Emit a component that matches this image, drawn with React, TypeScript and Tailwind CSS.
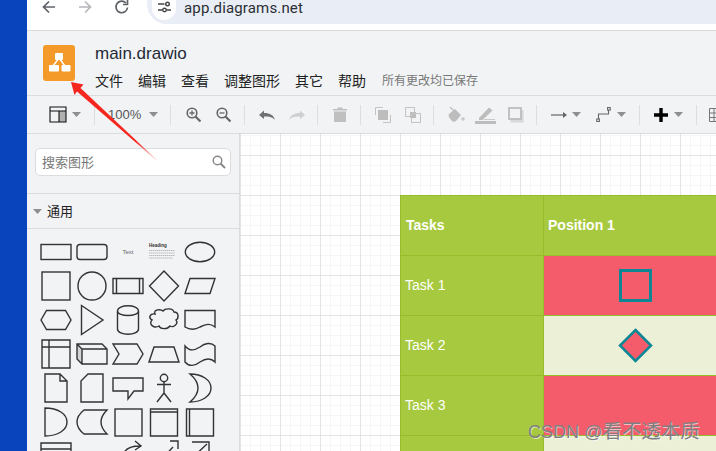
const BORDER = "border-[#dadce0]";

function Caret({ className = "" }: { className?: string }) {
  return (
    <svg width="9" height="5" viewBox="0 0 9 5" className={`shrink-0 ${className}`}>
      <path d="M0 0H9L4.5 5Z" fill="#8f8f8f" />
    </svg>
  );
}

function Sep({ className = "" }: { className?: string }) {
  return <div className={`w-px h-[20px] shrink-0 bg-[#dcdee1] ${className}`} />;
}

function BrowserBar() {
  return (
    <div className={`h-[31px] shrink-0 flex bg-white border-b ${BORDER}`}>
      <svg width="120" height="30" viewBox="0 0 120 30" className="shrink-0" fill="none" strokeWidth="1.7">
        <path d="M28 7H17M22 1.5L16.5 7L22 12.5" stroke="#5f6368" />
        <path d="M52 7H63M58 1.5L63.5 7L58 12.5" stroke="#b4b7bb" />
        <path d="M100.5 7.5A5.8 5.8 0 1 1 99 3" stroke="#5f6368" />
        <path d="M100.5 0V4.5H96" stroke="#5f6368" />
      </svg>
      <div className="h-[24px] flex-1 bg-[#e9edf6] rounded-bl-[20px] flex items-start pl-[5px]">
        <div className="w-[24px] h-[20px] bg-white rounded-b-full flex justify-center pt-[1px]">
          <svg width="13" height="12" viewBox="0 0 13 12" fill="none" stroke="#444746" strokeWidth="1.4">
            <path d="M0 3H6.5M0 9H4M9 9H13" />
            <circle cx="9.5" cy="3" r="1.8" />
            <circle cx="6.5" cy="9" r="1.8" />
          </svg>
        </div>
        <span className="ml-[8px] text-[15px] leading-[16px] tracking-[0.15px] text-[#2b2f33] font-['Roboto',sans-serif]">
          app.diagrams.net
        </span>
      </div>
    </div>
  );
}

function Logo() {
  return (
    <div className="w-[32px] h-[36px] rounded-[3px] bg-[#f39a2b] flex items-center justify-center shrink-0">
      <svg width="24" height="22" viewBox="0 0 24 22">
        <path d="M12 6L6 14M12 6L18 14" stroke="#fff" strokeWidth="1.4" />
        <rect x="8" y="1" width="8" height="7" rx="1" fill="#fff" />
        <rect x="2" y="13" width="10" height="6.5" rx="1" fill="#fff" />
        <rect x="14.5" y="13" width="9" height="6.5" rx="1" fill="#fff" />
      </svg>
    </div>
  );
}

function AppHeader() {
  const menus = ["文件", "编辑", "查看", "调整图形", "其它", "帮助"];
  return (
    <div className={`h-[65px] shrink-0 bg-[#f1f3f5] border-b ${BORDER} flex pl-[16px] pt-[14px]`}>
      <Logo />
      <div className="ml-[20px] -mt-[1px]">
        <div className="text-[17px] leading-[20px] text-[#1f2a36] font-['Liberation_Sans',sans-serif]">main.drawio</div>
        <div className="mt-[6px] flex items-center gap-[15px] text-[14px] leading-[20px] text-[#222] font-['Noto_Sans_CJK_SC',sans-serif]">
          {menus.map((m) => (
            <span key={m}>{m}</span>
          ))}
          <span className="ml-[1px] text-[12px] text-[#777]">所有更改均已保存</span>
        </div>
      </div>
    </div>
  );
}

function Toolbar() {
  return (
    <div className={`h-[38px] shrink-0 bg-[#f1f3f5] border-b ${BORDER} flex items-center overflow-hidden`}>
      <svg width="18" height="17" viewBox="0 0 18 17" className="ml-[22px] shrink-0">
        <path d="M10 5H17V16H10Z" fill="#b0b0b0" />
        <path d="M1 1H17V16H1ZM1 5H17M10 5V16" fill="none" stroke="#111" strokeWidth="1.1" />
      </svg>
      <Caret className="ml-[5px]" />
      <Sep className="ml-[13px]" />
      <span className="ml-[13px] w-[35px] text-[13px] leading-none text-[#555] font-['Liberation_Sans',sans-serif]">100%</span>
      <Caret className="ml-[8px]" />
      <Sep className="ml-[12px]" />
      <svg width="15" height="15" viewBox="0 0 15 15" className="ml-[15px] shrink-0" fill="none" stroke="#666" strokeWidth="1.6">
        <circle cx="6" cy="6" r="4.8" />
        <path d="M9.5 9.5L14.5 14.5" strokeWidth="2.2" />
        <path d="M3.5 6H8.5M6 3.5V8.5" strokeWidth="1.3" />
      </svg>
      <svg width="15" height="15" viewBox="0 0 15 15" className="ml-[15px] shrink-0" fill="none" stroke="#666" strokeWidth="1.6">
        <circle cx="6" cy="6" r="4.8" />
        <path d="M9.5 9.5L14.5 14.5" strokeWidth="2.2" />
        <path d="M3.5 6H8.5" strokeWidth="1.3" />
      </svg>
      <Sep className="ml-[13px]" />
      <svg width="16" height="10" viewBox="0 0 16 10" className="ml-[14px] shrink-0">
        <path d="M0 5L5 0.5V3C11 3 14.5 5 16 10C13.5 7 10.5 6.5 5 6.5V9Z" fill="#707070" />
      </svg>
      <svg width="16" height="10" viewBox="0 0 16 10" className="ml-[14px] shrink-0">
        <path d="M16 5L11 0.5V3C5 3 1.5 5 0 10C2.5 7 5.5 6.5 11 6.5V9Z" fill="#cfcfcf" />
      </svg>
      <Sep className="ml-[12px]" />
      <svg width="14" height="15" viewBox="0 0 14 15" className="ml-[15px] shrink-0">
        <path d="M0 2H4.5V0.5H9.5V2H14V3.5H0ZM1 4.5H13V15H1Z" fill="#c0c0c0" />
      </svg>
      <Sep className="ml-[13px]" />
      <svg width="16" height="16" viewBox="0 0 16 16" className="ml-[14px] shrink-0">
        <path d="M0.5 8V0.5H8M8 15.5H15.5V8" fill="none" stroke="#c4c4c4" />
        <rect x="3" y="3" width="10" height="10" fill="#bdbdbd" />
      </svg>
      <svg width="16" height="16" viewBox="0 0 16 16" className="ml-[14px] shrink-0">
        <rect x="0.5" y="0.5" width="9" height="9" fill="#f1f3f5" stroke="#c4c4c4" />
        <rect x="5" y="5" width="6" height="6" fill="#bdbdbd" />
        <rect x="6.5" y="6.5" width="9" height="9" fill="none" stroke="#c4c4c4" />
      </svg>
      <Sep className="ml-[12px]" />
      <svg width="17" height="16" viewBox="0 0 17 16" className="ml-[14px] shrink-0">
        <path d="M1 7L7 2L13 8L8 14C6.5 15 5 15 4 14L1.5 11C0.5 10 0.5 8 1 7Z" fill="#bdbdbd" />
        <path d="M2 0L7 5" stroke="#bdbdbd" strokeWidth="1.2" />
        <circle cx="15" cy="12" r="1.8" fill="#c8c8c8" />
      </svg>
      <svg width="21" height="18" viewBox="0 0 21 18" className="ml-[10px] shrink-0">
        <path d="M4 12L14 1.5L17.5 4.5L7.5 14H4Z" fill="#bdbdbd" />
        <rect x="0" y="15" width="21" height="3" fill="#bdbdbd" />
        <path d="M9 13.5H20" stroke="#c8c8c8" />
      </svg>
      <svg width="16" height="16" viewBox="0 0 16 16" className="ml-[12px] shrink-0">
        <rect x="2.5" y="3" width="13" height="12.5" fill="#d8d8d8" />
        <rect x="1" y="1" width="12" height="11" fill="#f1f3f5" stroke="#bdbdbd" strokeWidth="1.8" />
      </svg>
      <Sep className="ml-[12px]" />
      <svg width="16" height="8" viewBox="0 0 16 8" className="ml-[14px] shrink-0">
        <path d="M0 4H13" stroke="#666" strokeWidth="1.2" />
        <path d="M12 1L16 4L12 7Z" fill="#666" />
      </svg>
      <Caret className="ml-[5px]" />
      <svg width="15" height="15" viewBox="0 0 15 15" className="ml-[15px] shrink-0" fill="none" stroke="#666" strokeWidth="1.1">
        <path d="M2.5 12.5V7H12.5V2.5" />
        <rect x="0.8" y="12" width="2.6" height="2.6" fill="#f1f3f5" />
        <rect x="11.6" y="0.5" width="2.6" height="2.6" fill="#f1f3f5" />
      </svg>
      <Caret className="ml-[6px]" />
      <Sep className="ml-[13px]" />
      <svg width="14" height="14" viewBox="0 0 14 14" className="ml-[14px] shrink-0">
        <path d="M5.3 0H8.7V5.3H14V8.7H8.7V14H5.3V8.7H0V5.3H5.3Z" fill="#000" />
      </svg>
      <Caret className="ml-[6px]" />
      <Sep className="ml-[13px]" />
      <svg width="14" height="14" viewBox="0 0 14 14" className="ml-[12px] shrink-0" fill="none" stroke="#777">
        <path d="M0.5 0.5H14V13.5H0.5ZM0.5 5H14M0.5 9.5H14M5 0.5V13.5M10 0.5V13.5" />
      </svg>
    </div>
  );
}

const S = { fill: "none", stroke: "#333", strokeWidth: 1.4 };

const SHAPES: React.ReactNode[] = [
  <rect x="3" y="9.5" width="30" height="15" {...S} />,
  <rect x="3" y="9.5" width="30" height="15" rx="3" {...S} />,
  <text x="18" y="19" textAnchor="middle" fontSize="6" fill="#666" fontFamily="Liberation Sans, sans-serif">Text</text>,
  <g>
    <text x="3" y="12" fontSize="4.5" fontWeight="700" fill="#333" fontFamily="Liberation Sans, sans-serif">Heading</text>
    <path d="M3 15.5H29M3 18H29M3 20.5H29M3 23H27" stroke="#aaa" strokeWidth="0.8" strokeDasharray="1.5 0.5" />
  </g>,
  <ellipse cx="18" cy="17" rx="14.7" ry="9.7" {...S} />,
  <rect x="4" y="3" width="28" height="28" {...S} />,
  <circle cx="18" cy="17" r="14" {...S} />,
  <path d="M3 9.5H33V24.5H3ZM6.5 9.5V24.5M29.5 9.5V24.5" {...S} />,
  <path d="M18 2L32.5 17L18 32L3.5 17Z" {...S} />,
  <path d="M3 24.5L8 9.5H33L28 24.5Z" {...S} />,
  <path d="M3 17L8.5 7.5H27.5L33 17L27.5 26.5H8.5Z" {...S} />,
  <path d="M7.5 2.5L29 17L7.5 31.5Z" {...S} />,
  <path d="M7.5 8V26C7.5 33 28.5 33 28.5 26V8C28.5 1 7.5 1 7.5 8C7.5 14 28.5 14 28.5 8" {...S} />,
  <path d="M9 11C7 6 15 6 17 8C19 5 27 5 28 9C33 9 33 15 30 17C33 21 27 25 24 23C21 27 14 26 13 23C8 26 2 21 6 17C2 15 4 10 9 11Z" {...S} />,
  <path d="M3 7.5H33V24C28 20 24 21 18 24C13 27 8 27 3 24Z" {...S} />,
  <path d="M4 3H32V31H4ZM4 10H32M11 3V31" {...S} />,
  <g>
    <path d="M3 7L8 12V27L3 22Z" fill="#d4d4d4" />
    <path d="M3 7H28L33 12V27H8L3 22ZM3 7L8 12H33M8 12V27" {...S} />
  </g>,
  <path d="M3 7H27L33 17L27 27H3L9 17Z" {...S} />,
  <path d="M3 25L8 10H28L33 25Z" {...S} />,
  <path d="M3 9C8 15 13 13 18 10C23 6 29 5 33 9V25C29 21 24 21 18 25C13 29 7 30 3 25Z" {...S} />,
  <path d="M7 3H22L29 10V31H7ZM22 3V10H29" {...S} />,
  <path d="M14 3H29V31H7V10Z" {...S} />,
  <path d="M3 7H33V20H24L18 28V20H3Z" {...S} />,
  <g {...S}>
    <circle cx="18" cy="7" r="3.7" />
    <path d="M18 10.7V22M11 13.5H25M18 22L11 31M18 22L25 31" />
  </g>,
  <path d="M8 3C20 3 29 9 29 17C29 25 20 31 8 31C14 26 16 21 16 17C16 13 14 8 8 3Z" {...S} />,
  <path d="M7 3C20 3 29 9 29 17C29 25 20 31 7 31Z" {...S} />,
  <path d="M10 5H33C28 10 27 13 27 17C27 21 28 24 33 29H10C5 25 3 21 3 17C3 13 5 9 10 5Z" {...S} />,
  <rect x="5" y="4" width="27" height="27" {...S} />,
  <path d="M4.5 4H31.5V31H4.5ZM4.5 7H31.5" {...S} />,
  <path d="M4.5 4H31.5V31H4.5ZM7.5 4V31" {...S} />,
  <path d="M3 4H33V20H3ZM3 10H33" {...S} />,
  <span />,
  <path d="M13 32C13 24 18 20 30 20M25 15L31 20L25 24" {...S} transform="translate(0 -13)" />,
  <path d="M12 30L27 14M24 8H32V16" {...S} transform="translate(0 -6)" />,
  <path d="M10 8H27V17M10 24L25 10" {...S} transform="translate(0 -5)" />,
];

function Sidebar() {
  return (
    <aside className={`w-[213px] shrink-0 bg-[#f1f3f5] border-r ${BORDER} overflow-hidden`}>
      <div className={`h-[60px] border-b ${BORDER} px-[8px] pt-[14px]`}>
        <div className={`h-[28px] bg-white border ${BORDER} rounded-[5px] flex items-center justify-between pl-[6px] pr-[4px]`}>
          <span className="-mt-[1px] text-[13px] text-[#777] font-['Noto_Sans_CJK_SC',sans-serif]">搜索图形</span>
          <svg width="14" height="14" viewBox="0 0 14 14" fill="none" stroke="#888" strokeWidth="1.4">
            <circle cx="5.5" cy="5.5" r="4.3" />
            <path d="M8.5 8.5L13 13" strokeWidth="2" />
          </svg>
        </div>
      </div>
      <div className={`h-[35px] border-b ${BORDER} flex items-center pl-[6px]`}>
        <Caret />
        <span className="-mt-[1px] ml-[5px] text-[13px] text-[#222] font-['Noto_Sans_CJK_SC',sans-serif]">通用</span>
      </div>
      <div className="grid grid-cols-[repeat(5,36px)] auto-rows-[34px] pl-[10.5px] pt-[6px]">
        {SHAPES.map((shape, i) => (
          <svg key={i} width="36" height="34" viewBox="0 0 36 34" className="overflow-visible">
            {shape}
          </svg>
        ))}
      </div>
    </aside>
  );
}

const ROWS = [
  { label: "Task 1", bg: "bg-[#f55c6b]", mark: "square" },
  { label: "Task 2", bg: "bg-[#ebf0d6]", mark: "diamond" },
  { label: "Task 3", bg: "bg-[#f55c6b]", mark: "" },
  { label: "", bg: "bg-[#ebf0d6]", mark: "" },
];

function TaskTable() {
  return (
    <div className="ml-[160px] w-[400px] border-t border-l border-[#98bb2a] text-white text-[14px] font-['Liberation_Sans',sans-serif]">
      <div className="h-[60px] flex border-b border-[#98bb2a] bg-[#a7c93f] font-bold">
        <div className="w-[143px] border-r border-[#98bb2a] pl-[5px] flex items-center">Tasks</div>
        <div className="flex-1 pl-[4px] flex items-center">Position 1</div>
      </div>
      {ROWS.map((row, i) => (
        <div key={i} className="h-[60px] flex border-b border-[#98bb2a]">
          <div className="w-[143px] border-r border-[#98bb2a] bg-[#a7c93f] pl-[4px] flex items-center">{row.label}</div>
          <div className={`flex-1 ${row.bg}`}>
            <div className="w-[183px] h-full flex items-center justify-center">
              {row.mark === "square" && <div className="w-[33px] h-[33px] border-[3px] border-[#0d8796]" />}
              {row.mark === "diamond" && (
                <svg width="35" height="35" viewBox="0 0 35 35">
                  <path d="M17.5 2L33 17.5L17.5 33L2 17.5Z" fill="#f55c6b" stroke="#0d8796" strokeWidth="2.5" />
                </svg>
              )}
            </div>
          </div>
        </div>
      ))}
    </div>
  );
}

function Canvas() {
  return (
    <div className="flex-1 min-w-0 overflow-hidden pt-[61px] bg-white bg-[linear-gradient(to_right,#e4e4e4_1px,transparent_1px),linear-gradient(to_bottom,#e4e4e4_1px,transparent_1px),linear-gradient(to_right,#f6f6f6_1px,transparent_1px),linear-gradient(to_bottom,#f6f6f6_1px,transparent_1px)] bg-[size:40px_40px,40px_40px,10px_10px,10px_10px] bg-[position:0_0,0_21px,0_0,0_1px]">
      <TaskTable />
    </div>
  );
}

export default function App() {
  return (
    <div className="relative w-[716px] h-[451px] overflow-hidden flex bg-white">
      <div className="w-[27px] shrink-0 bg-[#0a44bc]" />
      <div className="flex-1 min-w-0 flex flex-col">
        <BrowserBar />
        <AppHeader />
        <Toolbar />
        <div className="flex-1 min-h-0 flex">
          <Sidebar />
          <Canvas />
        </div>
      </div>

      {/* annotation arrow drawn on top of the screenshot */}
      <svg width="716" height="451" viewBox="0 0 716 451" className="absolute left-0 top-0 pointer-events-none">
        <defs>
          <linearGradient id="arrowFade" x1="71" y1="82" x2="157" y2="160" gradientUnits="userSpaceOnUse">
            <stop offset="0" stopColor="#f5261e" />
            <stop offset="0.75" stopColor="#f5261e" />
            <stop offset="1" stopColor="#f5261e" stopOpacity="0.1" />
          </linearGradient>
        </defs>
        <path d="M71 82L83.5 84.5L80.5 88L157 160L156.5 160.5L77 91.5L74.5 95Z" fill="url(#arrowFade)" />
      </svg>

      <div className="absolute left-[528px] top-[419px] whitespace-nowrap text-[18px] leading-[24px] text-[#7f7f7f] [text-shadow:1px_1px_0_rgba(255,255,255,0.6)] font-['Liberation_Sans','Noto_Sans_CJK_SC',sans-serif]">
        CSDN @<span className="text-[19.5px]">看不透本质</span>
      </div>
    </div>
  );
}
